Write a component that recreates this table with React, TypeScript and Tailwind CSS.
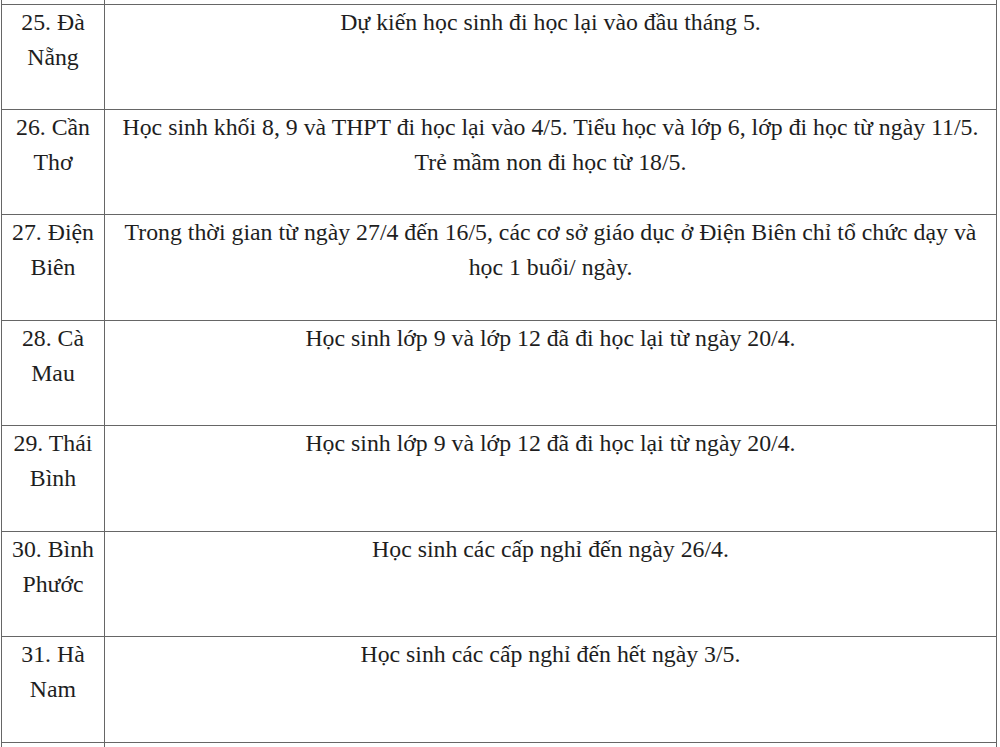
import React from "react";

const rows: { h: string; left: string[]; right: string[] }[] = [
  { h: "h-[105px]", left: ["25. Đà", "Nẵng"], right: ["Dự kiến học sinh đi học lại vào đầu tháng 5."] },
  { h: "h-[105px]", left: ["26. Cần", "Thơ"], right: ["Học sinh khối 8, 9 và THPT đi học lại vào 4/5. Tiểu học và lớp 6, lớp đi học từ ngày 11/5.", "Trẻ mầm non đi học từ 18/5."] },
  { h: "h-[106px]", left: ["27. Điện", "Biên"], right: ["Trong thời gian từ ngày 27/4 đến 16/5, các cơ sở giáo dục ở Điện Biên chỉ tổ chức dạy và", "học 1 buổi/ ngày."] },
  { h: "h-[105px]", left: ["28. Cà", "Mau"], right: ["Học sinh lớp 9 và lớp 12 đã đi học lại từ ngày 20/4."] },
  { h: "h-[106px]", left: ["29. Thái", "Bình"], right: ["Học sinh lớp 9 và lớp 12 đã đi học lại từ ngày 20/4."] },
  { h: "h-[105px]", left: ["30. Bình", "Phước"], right: ["Học sinh các cấp nghỉ đến ngày 26/4."] },
  { h: "h-[106px]", left: ["31. Hà", "Nam"], right: ["Học sinh các cấp nghỉ đến hết ngày 3/5."] },
];

export default function App() {
  return (
    <div className="w-[1000px] h-[747px] overflow-hidden bg-white text-[#1e1e1e] text-[23.8px] leading-[35px] [font-family:'Liberation_Serif','Times_New_Roman',serif]">
      <div className="ml-[1px] w-[996px]">
        <div className="flex h-[4px]">
          <div className="w-[104px] border-l border-r border-[#666]" />
          <div className="flex-1 border-r border-[#666]" />
        </div>
        {rows.map((r, i) => (
          <div key={i} className={`flex ${r.h} border-t border-[#666]`}>
            <div className="w-[104px] shrink-0 border-l border-r border-[#666] text-center">
              {r.left.map((t, j) => (
                <div key={j} className="whitespace-nowrap">{t}</div>
              ))}
            </div>
            <div className="flex-1 border-r border-[#666] text-center">
              {r.right.map((t, j) => (
                <div key={j} className="whitespace-nowrap">{t}</div>
              ))}
            </div>
          </div>
        ))}
        <div className="flex h-[10px] border-t border-[#666]">
          <div className="w-[104px] border-l border-r border-[#666]" />
          <div className="flex-1 border-r border-[#666]" />
        </div>
      </div>
    </div>
  );
}
